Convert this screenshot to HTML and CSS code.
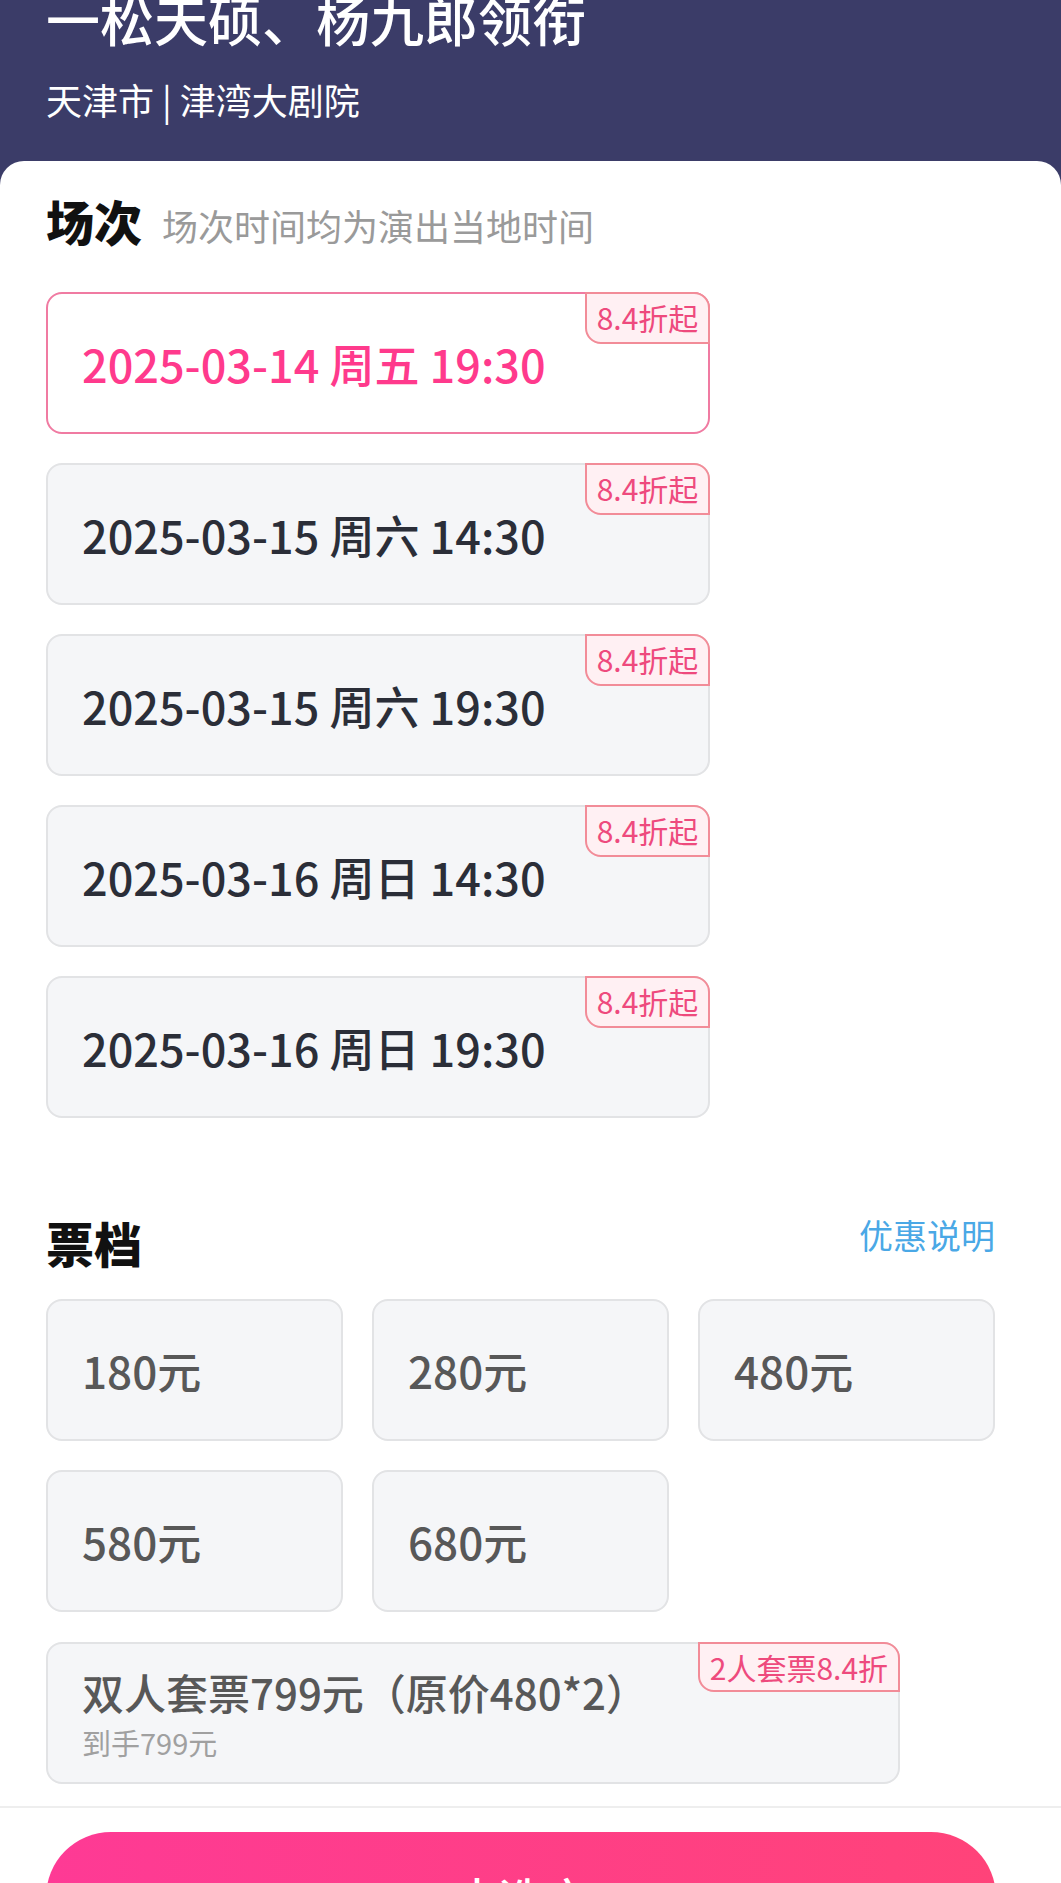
FILE: index.html
```html
<!DOCTYPE html>
<html lang="zh-CN">
  <head>
    <meta charset="UTF-8">
    <meta name="viewport" content="width=device-width, initial-scale=1.0">
    <title>选择场次票档</title>
    <link rel="stylesheet" href="styles.css">
  </head>
  <body>

    <header class="show-header">
      <h1 class="show-title">一松天硕、杨九郎领衔</h1>
      <p class="show-venue">天津市 | 津湾大剧院</p>
    </header>

    <main class="sheet">
      <div class="sheet-body">

        <div class="section-head">
          <h2>场次</h2>
          <span class="section-note">场次时间均为演出当地时间</span>
        </div>

        <ul class="session-list">
          <li class="option session active">
            2025-03-14 周五 19:30
            <span class="tag">8.4折起</span>
          </li>
          <li class="option session">
            2025-03-15 周六 14:30
            <span class="tag">8.4折起</span>
          </li>
          <li class="option session">
            2025-03-15 周六 19:30
            <span class="tag">8.4折起</span>
          </li>
          <li class="option session">
            2025-03-16 周日 14:30
            <span class="tag">8.4折起</span>
          </li>
          <li class="option session">
            2025-03-16 周日 19:30
            <span class="tag">8.4折起</span>
          </li>
        </ul>

        <div class="section-head tickets-head">
          <h2>票档</h2>
          <a class="discount-link" href="#">优惠说明</a>
        </div>

        <ul class="price-grid">
          <li class="option price">180元</li>
          <li class="option price">280元</li>
          <li class="option price">480元</li>
          <li class="option price">580元</li>
          <li class="option price">680元</li>
        </ul>

        <div class="option package">
          <p class="package-name">双人套票799元（原价480*2）</p>
          <p class="package-final">到手799元</p>
          <span class="tag">2人套票8.4折</span>
        </div>

      </div>

      <div class="action-bar">
        <button type="button" class="buy-button">去选座</button>
      </div>
    </main>

  </body>
</html>
```

FILE: styles.css
```css
/* Base */
* {
  box-sizing: border-box;
}

body {
  margin: 0;
  background-color: #3b3c68;
  font-family: "Noto Sans CJK SC", "Noto Sans", sans-serif;
  color: #222;
  overflow: hidden;
}

ul {
  list-style: none;
  margin: 0;
  padding: 0;
}

p, h1, h2 {
  margin: 0;
}

/* Header */
.show-header {
  display: flow-root;
  height: 161px;
  padding: 0 46px;
  color: #fff;
}

.show-title {
  margin-top: -12px;
  font-size: 54px;
  line-height: 62px;
  font-weight: 500;
}

.show-venue {
  margin-top: 26px;
  font-size: 36px;
  line-height: 46px;
}

/* Sheet */
.sheet {
  background-color: #fff;
  border-radius: 24px 24px 0 0;
}

.sheet-body {
  padding: 31px 66px 22px 46px;
  border-bottom: 2px solid #eeeeee;
}

.section-head {
  display: flex;
  align-items: baseline;
  gap: 20px;
  height: 56px;
}

.section-head h2 {
  font-size: 48px;
  line-height: 56px;
  font-weight: 900;
  color: #111;
}

.section-note {
  font-size: 36px;
  color: #9a9a9a;
}

.tickets-head {
  justify-content: space-between;
  margin-top: 96px;
}

.discount-link {
  margin-top: -4px;
  font-size: 34px;
  color: #4aa8e6;
  text-decoration: none;
  align-self: flex-start;
}

/* Options */
.option {
  position: relative;
  display: flex;
  align-items: center;
  height: 142px;
  padding: 0 34px;
  background-color: #f5f6f8;
  border: 2px solid #e2e3e5;
  border-radius: 16px;
  font-size: 44px;
  font-weight: 500;
}

.session-list {
  display: flex;
  flex-direction: column;
  gap: 29px;
  margin-top: 44px;
}

.session {
  width: 70%;
  font-size: 45px;
  color: #2b2e38;
}

.session.active {
  background-color: #fff;
  border-color: #f07ba2;
  color: #ff3a8c;
}

.tag {
  position: absolute;
  top: -2px;
  right: -2px;
  height: 52px;
  padding: 0 10px;
  background-color: #fff0f3;
  border: 2px solid #f28c98;
  border-radius: 0 16px 0 16px;
  font-size: 30px;
  font-weight: 400;
  line-height: 47px;
  color: #ee4a7d;
}

.price-grid {
  display: grid;
  grid-template-columns: repeat(3, 1fr);
  gap: 29px;
  margin-top: 29px;
}

.price {
  color: #585858;
}

.package {
  flex-direction: column;
  align-items: flex-start;
  justify-content: flex-start;
  width: 90%;
  margin-top: 30px;
  padding-top: 23px;
}

.package-name {
  font-size: 42px;
  line-height: 50px;
  color: #585858;
}

.package-final {
  margin-top: 5px;
  font-size: 29px;
  line-height: 40px;
  font-weight: 400;
  color: #a0a0a0;
}

.package .tag {
  height: 50px;
}

/* Action bar */
.action-bar {
  padding: 24px 65px 0 46px;
}

.buy-button {
  display: block;
  width: 100%;
  height: 130px;
  border: none;
  border-radius: 65px;
  background: linear-gradient(90deg, #fe3a95, #ff4379);
  color: #fff;
  font-family: inherit;
  font-size: 44px;
  font-weight: 500;
}
```
